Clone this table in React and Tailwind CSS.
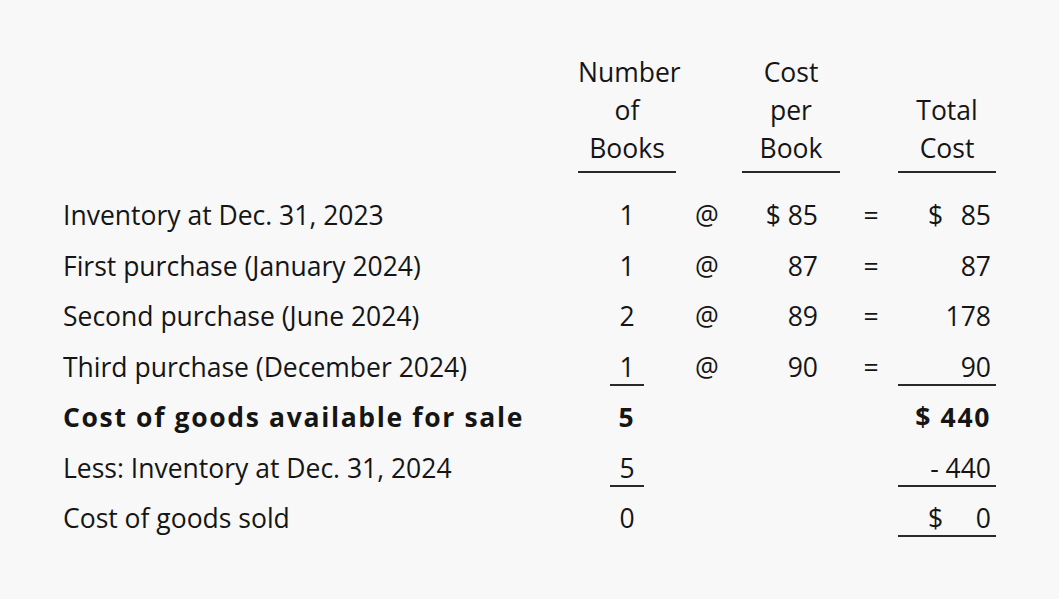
import React from "react";

const cols = "grid grid-cols-[515px_98px_66px_98px_58px_98px]";

function Cell({ children, className = "", line = false, inner = "" }) {
  return (
    <div className={`flex items-center h-[50.5px] ${className}`}>
      <div
        className={`h-[36px] leading-[35px] border-b-2 ${
          line ? "border-[#2a2a2a]" : "border-transparent"
        } ${inner}`}
      >
        {children}
      </div>
    </div>
  );
}

function Row({ label, count, countLine, at, cost, eq, total, totalLine, bold }) {
  const w = bold ? "font-bold tracking-[1.65px]" : "";
  return (
    <div className={`${cols} ${w}`}>
      <Cell>{label}</Cell>
      <Cell className="justify-center" line={countLine} inner="px-[9px] text-center">
        {count}
      </Cell>
      <Cell className="justify-center pr-[4px]">{at ? "@" : ""}</Cell>
      <Cell className="justify-end pr-[22px]">{cost}</Cell>
      <Cell className="justify-center pl-[4px]">{eq ? "=" : ""}</Cell>
      <Cell line={totalLine} inner="w-full">
        {total}
      </Cell>
    </div>
  );
}

function Dollar({ v }) {
  return (
    <div className="flex justify-between w-full pl-[30px] pr-[5px]">
      <span>$</span>
      <span>{v}</span>
    </div>
  );
}

function Right({ children }) {
  return <div className="text-right w-full pr-[5px]">{children}</div>;
}

export default function App() {
  return (
    <div
      className="w-[1059px] h-[599px] bg-[#f8f8f8] text-[#151515] pt-[53px] pl-[63px] text-[26.5px]"
      style={{ fontFamily: '"Open Sans", "Liberation Sans", sans-serif' }}
    >
      <div className={`${cols} items-end leading-[38px]`}>
        <div />
        <div className="text-center border-b-2 border-[#2a2a2a] pb-[4px]">
          Number
          <br />
          of
          <br />
          Books
        </div>
        <div />
        <div className="text-center border-b-2 border-[#2a2a2a] pb-[4px]">
          Cost
          <br />
          per
          <br />
          Book
        </div>
        <div />
        <div className="text-center border-b-2 border-[#2a2a2a] pb-[4px]">
          Total
          <br />
          Cost
        </div>
      </div>
      <div className="mt-[18px]">
        <Row label="Inventory at Dec. 31, 2023" count="1" at cost="$ 85" eq total={<Dollar v="85" />} />
        <Row label="First purchase (January 2024)" count="1" at cost="87" eq total={<Right>87</Right>} />
        <Row label="Second purchase (June 2024)" count="2" at cost="89" eq total={<Right>178</Right>} />
        <Row
          label="Third purchase (December 2024)"
          count="1"
          countLine
          at
          cost="90"
          eq
          total={<Right>90</Right>}
          totalLine
        />
        <Row label="Cost of goods available for sale" count="5" bold total={<Right>$ 440</Right>} />
        <Row
          label="Less: Inventory at Dec. 31, 2024"
          count="5"
          countLine
          total={<Right>- 440</Right>}
          totalLine
        />
        <Row label="Cost of goods sold" count="0" total={<Dollar v="0" />} totalLine />
      </div>
    </div>
  );
}
